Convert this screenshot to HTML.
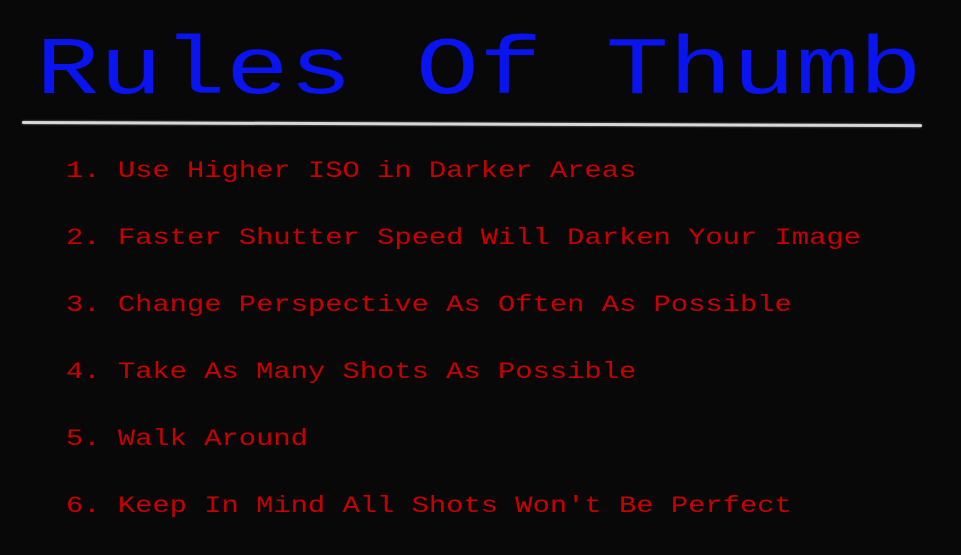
<!DOCTYPE html>
<html><head><style>
html,body{margin:0;padding:0;background:#080808;width:961px;height:555px;overflow:hidden}
.t{position:absolute;left:36px;top:13px;font:105px/105px "Liberation Mono",monospace;color:#0a14f0;white-space:pre;letter-spacing:0.3px;transform:scaleY(0.78);transform-origin:0 80px}
.line{position:absolute;left:22px;top:121px;width:900px;height:3px;background:#d8d8d8;transform:rotate(0.2deg);transform-origin:left center;border-radius:2px;box-shadow:0 0 2px #888}
.l{position:absolute;left:66px;font:28.8px/67px "Liberation Mono",monospace;color:#c80000;white-space:pre;transform:scaleY(0.8);transform-origin:0 41px}
</style></head><body>
<div class="t">Rules Of Thumb</div>
<div class="line"></div>
<div class="l" style="top:136px">1. Use Higher ISO in Darker Areas</div>
<div class="l" style="top:203px">2. Faster Shutter Speed Will Darken Your Image</div>
<div class="l" style="top:270px">3. Change Perspective As Often As Possible</div>
<div class="l" style="top:337px">4. Take As Many Shots As Possible</div>
<div class="l" style="top:404px">5. Walk Around</div>
<div class="l" style="top:471px">6. Keep In Mind All Shots Won't Be Perfect</div>
</body></html>
